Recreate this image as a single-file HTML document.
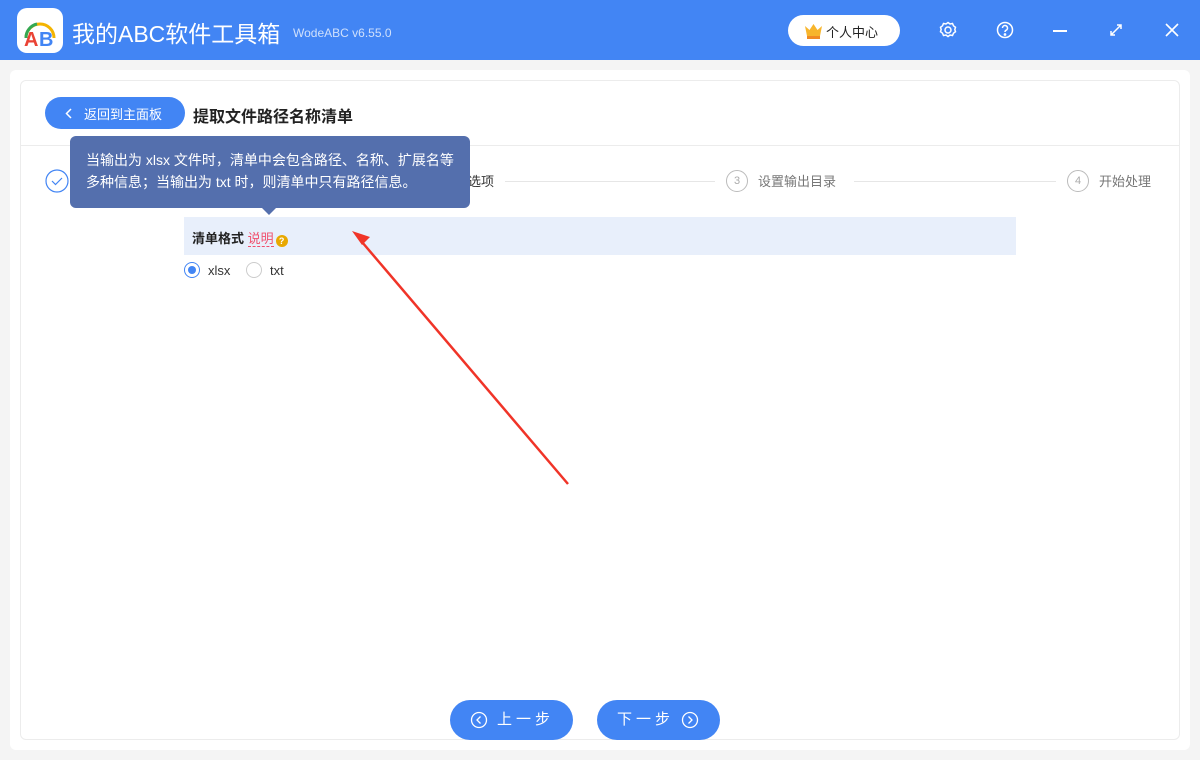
<!DOCTYPE html>
<html><head><meta charset="utf-8"><style>
*{margin:0;padding:0;box-sizing:border-box}
body{width:1200px;height:760px;overflow:hidden;background:#f4f4f4;font-family:"Liberation Sans","Noto Sans CJK SC",sans-serif;position:relative}
.top{position:absolute;left:0;top:0;width:1200px;height:60px;background:#4285f4}
.logo{position:absolute;left:17px;top:8px;width:46px;height:45px;background:#fff;border-radius:10px}
.title{position:absolute;left:72px;top:15px;color:#fff;font-size:23px}
.ver{position:absolute;left:293px;top:26px;color:#cfe0fc;font-size:12px}
.vip{position:absolute;left:788px;top:15px;width:112px;height:31px;background:#fff;border-radius:16px;font-size:13px;color:#222;padding:7px 0 0 38px}
.outer{position:absolute;left:10px;top:70px;width:1180px;height:680px;background:#fff;border-radius:6px}
.card{position:absolute;left:20px;top:80px;width:1160px;height:660px;border:1px solid #ececec;border-radius:6px}
.hline{position:absolute;left:21px;top:145px;width:1158px;height:1px;background:#ececec}
.back{position:absolute;left:45px;top:97px;width:140px;height:32px;background:#4285f4;border-radius:16px;color:#fff;font-size:13px;padding:7px 0 0 39px}
.h1{position:absolute;left:193px;top:103px;font-size:16px;font-weight:bold;color:#222}
.step{position:absolute;font-size:13px;color:#777;top:171px}
.circ{position:absolute;width:22px;height:22px;border:1px solid #bbb;border-radius:50%;font-size:11px;color:#aaa;text-align:center;line-height:20px;top:170px}
.line{position:absolute;height:1px;background:#e6e6e6;top:181px}
.tip{position:absolute;left:70px;top:136px;width:400px;height:72px;background:#546fad;border-radius:6px;color:#fff;font-size:14px;line-height:22px;padding:13px 0 0 16px;white-space:nowrap}
.tip:after{content:"";position:absolute;left:192px;bottom:-7px;border:7px solid transparent;border-bottom:0;border-top-color:#546fad}
.bar{position:absolute;left:184px;top:217px;width:832px;height:38px;background:#e8effb;font-size:13px;font-weight:bold;color:#222;padding:11px 0 0 8px}
.btn{position:absolute;top:700px;width:123px;height:40px;background:#4285f4;border-radius:20px;color:#fff;font-size:15px;line-height:40px;letter-spacing:4px}
.r{position:absolute;top:262px;width:16px;height:16px;border:1px solid #ccc;border-radius:50%}
</style></head><body>
<div class="top">
<div class="logo"><svg width="46" height="45"><path d="M9 30 A14 14 0 0 1 37 30" fill="none" stroke="#f4b400" stroke-width="3"/><path d="M9 30 A14 14 0 0 1 20 16" fill="none" stroke="#34a853" stroke-width="3"/><text x="7" y="38" font-size="20" font-weight="bold" fill="#ea4335" font-family="Liberation Sans">A</text><text x="22" y="38" font-size="20" font-weight="bold" fill="#4285f4" font-family="Liberation Sans">B</text></svg></div>
<div class="title">我的ABC软件工具箱</div><div class="ver">WodeABC v6.55.0</div>
<div class="vip"><svg style="position:absolute;left:16px;top:8px" width="19" height="16"><path d="M1 3l4.5 4L9.5 1l4 6L18 3l-2 10H3z" fill="#f7b52c"/><rect x="3" y="13" width="13" height="3" fill="#f08a24"/></svg>个人中心</div>
<svg style="position:absolute;left:938px;top:20px" width="20" height="20" fill="none" stroke="#fff" stroke-width="1.5"><circle cx="10" cy="10" r="3"/><path d="M10 2.5l2 1.5 2.5-.5 1 2.3 2 1.5-.7 2.2.7 2.2-2 1.5-1 2.3-2.5-.5-2 1.5-2-1.5-2.5.5-1-2.3-2-1.5.7-2.2-.7-2.2 2-1.5 1-2.3 2.5.5z"/></svg>
<svg style="position:absolute;left:995px;top:20px" width="20" height="20" fill="none" stroke="#fff" stroke-width="1.5"><circle cx="10" cy="10" r="7.5"/><path d="M7.5 8a2.5 2.5 0 1 1 3.5 2.3c-.8.4-1 .8-1 1.7"/><circle cx="10" cy="14.5" r=".6" fill="#fff"/></svg>
<div style="position:absolute;left:1053px;top:30px;width:14px;height:1.5px;background:#fff"></div>
<svg style="position:absolute;left:1109px;top:23px" width="14" height="14" stroke="#fff" stroke-width="1.5" fill="none"><path d="M2 12L12 2M8 2h4v4M2 8v4h4"/></svg>
<svg style="position:absolute;left:1165px;top:23px" width="14" height="14" stroke="#fff" stroke-width="1.6"><path d="M1 1L13 13M13 1L1 13"/></svg>
</div>
<div class="outer"></div><div class="card"></div><div class="hline"></div>
<div class="back"><svg style="position:absolute;left:20px;top:11px" width="8" height="11" fill="none" stroke="#fff" stroke-width="1.5"><path d="M6 1L1.5 5.5 6 10"/></svg>返回到主面板</div>
<div class="h1">提取文件路径名称清单</div>
<svg style="position:absolute;left:45px;top:169px" width="24" height="24" fill="none" stroke="#4285f4" stroke-width="1.2"><circle cx="12" cy="12" r="11"/><path d="M7 12l3.5 3.5L17 9"/></svg>
<div class="step" style="left:455px;color:#333">选选项</div>
<div class="line" style="left:505px;width:210px"></div>
<div class="circ" style="left:726px">3</div><div class="step" style="left:758px">设置输出目录</div>
<div class="line" style="left:854px;width:202px"></div>
<div class="circ" style="left:1067px">4</div><div class="step" style="left:1099px">开始处理</div>
<div class="tip">当输出为 xlsx 文件时，清单中会包含路径、名称、扩展名等<br>多种信息；当输出为 txt 时，则清单中只有路径信息。</div>
<div class="bar">清单格式 <span style="color:#f0506e;font-weight:normal;border-bottom:1px dashed #f0506e">说明</span><span style="display:inline-block;width:12px;height:12px;border-radius:50%;background:#e8a800;color:#fff;font-size:9px;text-align:center;line-height:12px;margin-left:2px;vertical-align:-1px">?</span></div>
<div class="r" style="left:184px;border-color:#4285f4"><div style="position:absolute;left:3px;top:3px;width:8px;height:8px;border-radius:50%;background:#4285f4"></div></div>
<div style="position:absolute;left:208px;top:263px;font-size:13px;color:#333">xlsx</div>
<div class="r" style="left:246px"></div>
<div style="position:absolute;left:270px;top:263px;font-size:13px;color:#333">txt</div>
<svg style="position:absolute;left:0;top:0" width="1200" height="760"><path d="M568 484L362 242" stroke="#f03428" stroke-width="2.5"/><path d="M352 231l18 6-8 8z" fill="#f03428"/></svg>
<div class="btn" style="left:450px;padding-left:47px"><svg style="position:absolute;left:20px;top:11px" width="18" height="18" fill="none" stroke="#fff" stroke-width="1.3"><circle cx="9" cy="9" r="7.5"/><path d="M10.5 5.5L7 9l3.5 3.5"/></svg>上一步</div>
<div class="btn" style="left:597px;padding-left:20px">下一步<svg style="position:absolute;left:84px;top:11px" width="18" height="18" fill="none" stroke="#fff" stroke-width="1.3"><circle cx="9" cy="9" r="7.5"/><path d="M7.5 5.5L11 9l-3.5 3.5"/></svg></div>
</body></html>
